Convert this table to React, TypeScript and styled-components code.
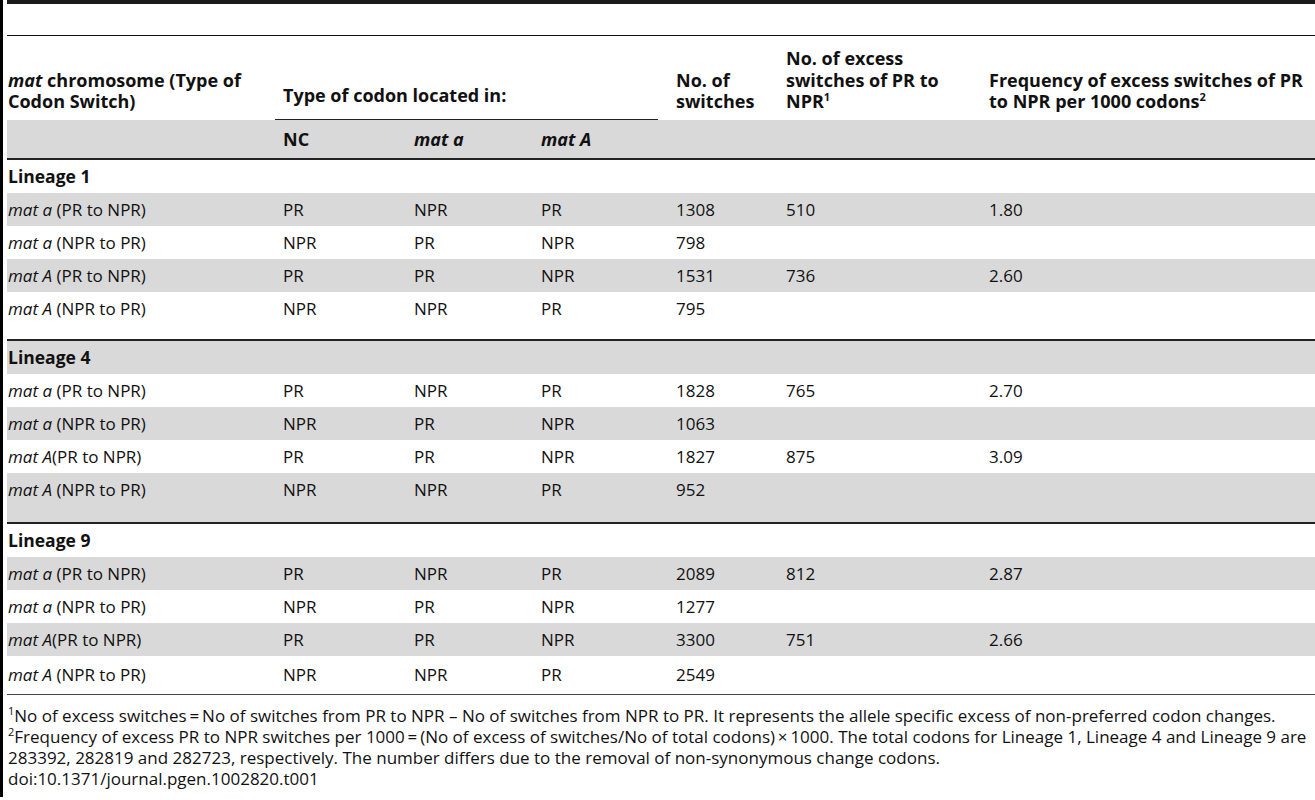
import React from "react";
import styled, { createGlobalStyle } from "styled-components";

const GlobalStyle = createGlobalStyle`
  html, body { margin: 0; padding: 0; background: #ffffff; }
  body { font-family: "Open Sans", "Noto Sans", sans-serif; color: #111; }
`;

const Page = styled.div`
  display: flex;
  width: 1315px;
  height: 800px;
  overflow: hidden;
`;

const LeftRule = styled.div`
  flex: 0 0 3px;
  height: 797px;
  background: #000;
`;

const Content = styled.div`
  flex: 1;
  margin-left: 4px;
  display: flex;
  flex-direction: column;
  min-width: 0;
`;

const TopRule = styled.div`
  height: 4px;
  background: #1a1a1a;
`;

const Spacer = styled.div`
  height: 31px;
  border-bottom: 1px solid #111;
`;

const Table = styled.table`
  border-collapse: collapse;
  table-layout: fixed;
  width: 1308px;
  font-size: 17px;
`;

const HeadCell = styled.th<{ $pt?: number }>`
  text-align: left;
  vertical-align: bottom;
  font-weight: 700;
  font-size: 18px;
  line-height: 21.5px;
  padding: ${(p) => p.$pt ?? 0}px 4px 7px 1px;
  white-space: nowrap;
`;

const GroupHead = styled.th`
  text-align: left;
  vertical-align: bottom;
  font-weight: 700;
  font-size: 18px;
  line-height: 21.5px;
  padding: 0 0 13px 1px;
  position: relative;
  white-space: nowrap;
  &::after {
    content: "";
    position: absolute;
    left: -7px;
    right: 17px;
    bottom: 0;
    border-bottom: 1px solid #222;
  }
`;

const SubHeadRow = styled.tr`
  background: #d9d9d9;
  border-bottom: 2px solid #222;
  height: 39px;
`;

const SubHeadCell = styled.th<{ $italic?: boolean }>`
  text-align: left;
  font-weight: 700;
  font-size: 18px;
  font-style: ${(p) => (p.$italic ? "italic" : "normal")};
  padding: 0 8px 0 1px;
  vertical-align: middle;
`;

const Row = styled.tr<{ $shade: boolean; $rule?: boolean }>`
  background: ${(p) => (p.$shade ? "#d9d9d9" : "#ffffff")};
  border-top: ${(p) => (p.$rule ? "2px solid #222" : "none")};
`;

const Cell = styled.td<{ $h: number; $top?: boolean }>`
  height: ${(p) => p.$h}px;
  vertical-align: ${(p) => (p.$top ? "top" : "middle")};
  padding: ${(p) => (p.$top ? "6px" : "0")} 8px 0 1px;
  line-height: 21px;
  box-sizing: border-box;
  white-space: nowrap;
`;

const LineageCell = styled.td`
  height: 33px;
  font-weight: 700;
  font-size: 17.5px;
  padding: 0 8px 0 1px;
  vertical-align: middle;
`;

const Foot = styled.div`
  border-top: 1px solid #444;
  padding: 10px 0 0 1px;
  font-size: 17px;
  line-height: 21px;
`;

const FootLine = styled.div`
  white-space: nowrap;
`;

const Sup = styled.sup`
  font-size: 11px;
  line-height: 0;
  vertical-align: super;
`;

const I = styled.i`
  font-style: italic;
`;

type DataRow = {
  chrom: "a" | "A";
  label: string;
  vals: [string, string, string, string, string, string];
};

type Group = { name: string; rows: DataRow[]; tail: number };

const groups: Group[] = [
  {
    name: "Lineage 1",
    tail: 48,
    rows: [
      { chrom: "a", label: " (PR to NPR)", vals: ["PR", "NPR", "PR", "1308", "510", "1.80"] },
      { chrom: "a", label: " (NPR to PR)", vals: ["NPR", "PR", "NPR", "798", "", ""] },
      { chrom: "A", label: " (PR to NPR)", vals: ["PR", "PR", "NPR", "1531", "736", "2.60"] },
      { chrom: "A", label: " (NPR to PR)", vals: ["NPR", "NPR", "PR", "795", "", ""] },
    ],
  },
  {
    name: "Lineage 4",
    tail: 50,
    rows: [
      { chrom: "a", label: " (PR to NPR)", vals: ["PR", "NPR", "PR", "1828", "765", "2.70"] },
      { chrom: "a", label: " (NPR to PR)", vals: ["NPR", "PR", "NPR", "1063", "", ""] },
      { chrom: "A", label: "(PR to NPR)", vals: ["PR", "PR", "NPR", "1827", "875", "3.09"] },
      { chrom: "A", label: " (NPR to PR)", vals: ["NPR", "NPR", "PR", "952", "", ""] },
    ],
  },
  {
    name: "Lineage 9",
    tail: 38,
    rows: [
      { chrom: "a", label: " (PR to NPR)", vals: ["PR", "NPR", "PR", "2089", "812", "2.87"] },
      { chrom: "a", label: " (NPR to PR)", vals: ["NPR", "PR", "NPR", "1277", "", ""] },
      { chrom: "A", label: "(PR to NPR)", vals: ["PR", "PR", "NPR", "3300", "751", "2.66"] },
      { chrom: "A", label: " (NPR to PR)", vals: ["NPR", "NPR", "PR", "2549", "", ""] },
    ],
  },
];

const colWidths = [275, 131, 127, 135, 110, 203, 327];

export default function App() {
  let stripe = 0;
  const body: React.ReactNode[] = [];
  groups.forEach((g, gi) => {
    const lastGroup = gi === groups.length - 1;
    body.push(
      <Row key={g.name} $shade={stripe++ % 2 === 1} $rule={gi > 0}>
        <LineageCell colSpan={7}>{g.name}</LineageCell>
      </Row>
    );
    g.rows.forEach((r, ri) => {
      const last = ri === g.rows.length - 1;
      const h = last ? g.tail : 33;
      const top = last && !lastGroup;
      body.push(
        <Row key={g.name + ri} $shade={stripe++ % 2 === 1}>
          <Cell $h={h} $top={top}>
            <I>mat {r.chrom}</I>
            {r.label}
          </Cell>
          {r.vals.map((v, vi) => (
            <Cell key={vi} $h={h} $top={top}>
              {v}
            </Cell>
          ))}
        </Row>
      );
    });
  });

  return (
    <>
      <GlobalStyle />
      <Page>
        <LeftRule />
        <Content>
          <TopRule />
          <Spacer />
          <Table>
            <colgroup>
              {colWidths.map((w, i) => (
                <col key={i} style={{ width: w }} />
              ))}
            </colgroup>
            <thead>
              <tr>
                <HeadCell>
                  <I>mat</I> chromosome (Type of
                  <br />
                  Codon Switch)
                </HeadCell>
                <GroupHead colSpan={3}>Type of codon located in:</GroupHead>
                <HeadCell>
                  No. of
                  <br />
                  switches
                </HeadCell>
                <HeadCell $pt={12}>
                  No. of excess
                  <br />
                  switches of PR to
                  <br />
                  NPR<Sup>1</Sup>
                </HeadCell>
                <HeadCell>
                  Frequency of excess switches of PR
                  <br />
                  to NPR per 1000 codons<Sup>2</Sup>
                </HeadCell>
              </tr>
              <SubHeadRow>
                <SubHeadCell />
                <SubHeadCell>NC</SubHeadCell>
                <SubHeadCell $italic>mat a</SubHeadCell>
                <SubHeadCell $italic>mat A</SubHeadCell>
                <SubHeadCell />
                <SubHeadCell />
                <SubHeadCell />
              </SubHeadRow>
            </thead>
            <tbody>{body}</tbody>
          </Table>
          <Foot>
            <FootLine>
              <Sup>1</Sup>No of excess switches{"\u2009=\u2009"}No of switches from PR to NPR – No of switches from NPR
              to PR. It represents the allele specific excess of non-preferred codon changes.
            </FootLine>
            <FootLine>
              <Sup>2</Sup>Frequency of excess PR to NPR switches per 1000{"\u2009=\u2009"}(No of excess of switches/No of
              total codons){"\u2009×\u2009"}1000. The total codons for Lineage 1, Lineage 4 and Lineage 9 are
            </FootLine>
            <FootLine>
              283392, 282819 and 282723, respectively. The number differs due to the removal of non-synonymous change
              codons.
            </FootLine>
            <FootLine>doi:10.1371/journal.pgen.1002820.t001</FootLine>
          </Foot>
        </Content>
      </Page>
    </>
  );
}
